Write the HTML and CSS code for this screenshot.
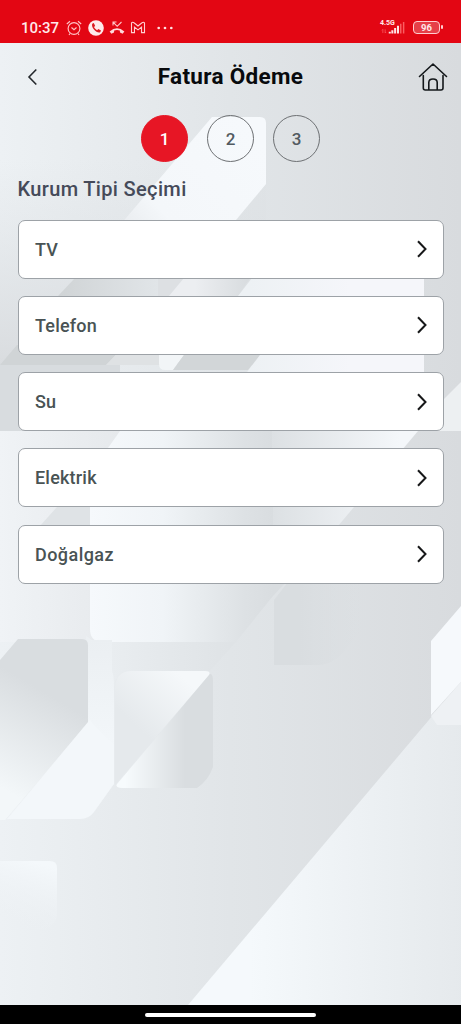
FILE: index.html
```html
<!DOCTYPE html>
<html lang="tr">
<head>
<meta charset="utf-8">
<title>Fatura Ödeme</title>
<link rel="stylesheet" href="styles.css">
</head>
<body>
<div class="screen">
  <svg class="backdrop" viewBox="0 43 461 962" preserveAspectRatio="none" aria-hidden="true">
    <defs>
      <linearGradient id="base"><stop stop-color="#edf1f4"/><stop offset=".5" stop-color="#e1e5e8"/><stop offset="1" stop-color="#d8dbde"/></linearGradient>
      <linearGradient id="sweep" gradientUnits="userSpaceOnUse" x1="250" y1="0" x2="480" y2="0"><stop stop-color="#f5f9fc"/><stop offset="1" stop-color="#e4e8eb"/></linearGradient>
      <linearGradient id="upper" x1="0" y1="0" x2="0" y2="1"><stop stop-color="#dce0e3" stop-opacity="0"/><stop offset="1" stop-color="#d9dcdf"/></linearGradient>
      <linearGradient id="shine" gradientUnits="userSpaceOnUse" x1="250" y1="130" x2="110" y2="250"><stop stop-color="#f6f9fc"/><stop offset=".65" stop-color="#f4f7fa"/><stop offset="1" stop-color="#e2e5e8"/></linearGradient>
      <linearGradient id="stripe" gradientUnits="userSpaceOnUse" x1="60" y1="0" x2="158" y2="0"><stop stop-color="#d0d4d6"/><stop offset="1" stop-color="#e1e5e8"/></linearGradient>
      <linearGradient id="stripe2" gradientUnits="userSpaceOnUse" x1="195" y1="0" x2="248" y2="0"><stop stop-color="#eceef1"/><stop offset="1" stop-color="#d8dcdf"/></linearGradient>
      <linearGradient id="panel" gradientUnits="userSpaceOnUse" x1="250" y1="0" x2="350" y2="0"><stop stop-color="#edf1f4"/><stop offset="1" stop-color="#f5f6fa"/></linearGradient>
      <linearGradient id="column" gradientUnits="userSpaceOnUse" x1="90" y1="0" x2="273" y2="0"><stop stop-color="#f6f9fc"/><stop offset=".4" stop-color="#f0f4f7"/><stop offset=".85" stop-color="#dde1e4"/><stop offset="1" stop-color="#d9dde0"/></linearGradient>
      <linearGradient id="leaf" gradientUnits="userSpaceOnUse" x1="58" y1="700" x2="5" y2="790"><stop stop-color="#d9dde0"/><stop offset="1" stop-color="#f3f7f9"/></linearGradient>
      <linearGradient id="tileTop" gradientUnits="userSpaceOnUse" x1="180" y1="675" x2="135" y2="725"><stop stop-color="#f5f8fa"/><stop offset="1" stop-color="#e5e9ec"/></linearGradient>
      <linearGradient id="tileLow" gradientUnits="userSpaceOnUse" x1="125" y1="0" x2="185" y2="0"><stop stop-color="#f7fbfd"/><stop offset="1" stop-color="#d9dde0"/></linearGradient>
      <linearGradient id="small" gradientUnits="userSpaceOnUse" x1="45" y1="865" x2="25" y2="932"><stop stop-color="#f4f8fb"/><stop offset="1" stop-color="#ecf0f3" stop-opacity="0"/></linearGradient>
      <linearGradient id="band" gradientUnits="userSpaceOnUse" x1="270" y1="0" x2="400" y2="0"><stop stop-color="#dce0e3"/><stop offset="1" stop-color="#f4f7fa"/></linearGradient>
      <linearGradient id="left" gradientUnits="userSpaceOnUse" x1="0" y1="0" x2="120" y2="0"><stop stop-color="#f0f3f6"/><stop offset="1" stop-color="#e6e9ec"/></linearGradient>
      <linearGradient id="gap" gradientUnits="userSpaceOnUse" x1="0" y1="640" x2="0" y2="750"><stop stop-color="#ebeff2"/><stop offset="1" stop-color="#f3f7fa"/></linearGradient>
      <linearGradient id="under" gradientUnits="userSpaceOnUse" x1="88" y1="0" x2="230" y2="0"><stop stop-color="#ebeff2"/><stop offset="1" stop-color="#dfe3e6"/></linearGradient>
      <linearGradient id="block" gradientUnits="userSpaceOnUse" x1="300" y1="0" x2="370" y2="0"><stop stop-color="#d9dde0"/><stop offset="1" stop-color="#dbdfe2" stop-opacity="0"/></linearGradient>
    </defs>
    <rect y="43" width="461" height="962" fill="url(#base)"/>
    <path d="M0 160H266V365H0Z" fill="url(#upper)"/>
    <path d="M212 117H260Q266 117 266 123V184L236 220 185 278H75Z" fill="url(#shine)"/>
    <path d="M75 278H158V296H58Z" fill="url(#stripe)"/>
    <path d="M17 345H125L106 365H0Z" fill="#d0d4d6"/>
    <path d="M0 365H120V431H0Z" fill="#d8dcdf"/>
    <path d="M125 345H159V365H106Z" fill="#dfe2e4"/>
    <path d="M158 278H184L169 296H158Z" fill="#dde0e3"/>
    <path d="M184 278H250L238 296H169Z" fill="url(#stripe2)"/>
    <path d="M159 355H184L173 370H165Q159 370 159 364Z" fill="#f2f5f7"/>
    <path d="M184 355H260L248 370H173Z" fill="#d2d6d8"/>
    <path d="M252 278H424V376H244L260 355 238 296Z" fill="url(#panel)"/>
    <path d="M461 382V431H405L443 400Z" fill="#edf0f2"/>
    <path d="M0 431H120V642H0Z" fill="url(#left)"/>
    <path d="M120 431H273V510H100L108 448Z" fill="url(#column)"/>
    <path d="M272 431H418L402 450 338 526H272Z" fill="url(#band)"/>
    <path d="M57 507H90V526H40Z" fill="#dfe3e6"/>
    <path d="M90 507H273V596L236 642H103Q90 642 90 629Z" fill="url(#column)"/>
    <path d="M273 526H338L284 584 273 596Z" fill="#d9dde0"/>
    <path d="M274 600L288 582H400L345 650Q333 665 318 665H274Z" fill="url(#block)"/>
    <path d="M86 636L95 642H236L210 671H131Q114 671 114 690H86Z" fill="url(#under)"/>
    <path d="M86 640H112V671Q114 675 114 690V784H86Z" fill="url(#gap)"/>
    <path d="M0 660L18 639H82Q88 639 88 645V723L5 820H0Z" fill="url(#leaf)"/>
    <path d="M88 722L90 720 114 745V784L94 812Q89 819 80 819H7Z" fill="#f3f7fa"/>
    <path d="M131 671H205Q211 671 209 675L115 785V690Q115 671 131 671Z" fill="url(#tileTop)"/>
    <path d="M210 674Q213 673 213 682V767Q208 781 197 788H122Q115 788 117 784Z" fill="url(#tileLow)"/>
    <path d="M0 861H50Q57 861 57 868V916Q55 926 44 930H0Z" fill="url(#small)"/>
    <path d="M188 1005L461 682V1005Z" fill="url(#sweep)"/>
    <path d="M461 606L431 641V715L461 682Z" fill="#f6f9fc"/>
    <path d="M461 682V725H437L431 716Z" fill="#eef1f4"/>
  </svg>

  <header class="status">
    <div class="status-left">
      <time class="clock">10:37</time>
      <svg class="ic-alarm" viewBox="0 0 16 16"><circle cx="8" cy="8.5" r="5.9"/><path d="M.8 4 4 1.3M15.2 4 12 1.3M5.5 7.5 8 9.7 10.5 7.5M4 13.5 3 15M12 13.5 13 15"/></svg>
      <svg class="ic-call" viewBox="0 0 16 16"><circle cx="8" cy="8" r="7.8" fill="#ffe9ea"/><path d="M4.2 3.7 5.8 3.1 7.2 6 5.9 7.1Q7 9.2 9.1 10.2L10.3 8.9 13 10.4 12.2 12.2C9.5 14 2.8 8 4.2 3.7Z" fill="#dc1820"/></svg>
      <svg class="ic-missed" viewBox="0 0 16 16"><path d="M4 5.5V2H7.5M4 2 8.2 6.3 12.5 2" fill="none" stroke="#ffc5c8" stroke-width="1.1"/><path d="M.6 11.5Q8 5 15.4 11.5L13.6 13.8 11 12.4 10.8 10.6Q8 9.4 5.2 10.6L5 12.4 2.4 13.8Z" fill="#ffd9db"/></svg>
      <svg class="ic-mail" viewBox="0 0 16 14"><path d="M1 12.5V2Q2.2 .6 3.7 1.9L8 5.4 12.3 1.9Q13.8 .6 15 2V12.5H11.8V6.5L8 9.5 4.2 6.5V12.5Z"/></svg>
      <svg class="ic-more" viewBox="0 0 16 4"><circle cx="1.7" cy="2" r="1.35"/><circle cx="8" cy="2" r="1.35"/><circle cx="14.3" cy="2" r="1.35"/></svg>
    </div>
    <div class="status-right">
      <div class="network">
        <span class="network-type">4.5G</span>
        <svg class="ic-signal" viewBox="0 0 26 13"><path d="M2 8V12M1 9 2 8M4.5 8V12M5.5 11 4.5 12" stroke="#ff6e72" stroke-width=".7" fill="none"/><path d="M9.5 10.5V12.5M12.3 9V12.5M15.3 6.5V12.5M18.4 4V12.5" stroke="#ffe4e5" stroke-width="2.2"/><path d="M21.4 2V12.5M24.5 0V12.5" stroke="#f95d61" stroke-width="1.6"/></svg>
      </div>
      <div class="battery"><span class="battery-level">96</span></div>
    </div>
  </header>

  <nav class="topbar">
    <svg class="ic-back" viewBox="0 0 10 18"><path d="M8.8 1.5 1.5 9 8.8 16.5"/></svg>
    <h1 class="title">Fatura Ödeme</h1>
    <svg class="ic-home" viewBox="0 0 30 30"><path d="M1.5 14.5 15 2 28.5 14.5M5.3 13.5V26Q5.3 28 7.3 28H23Q25 28 25 26V13.5M10.8 28V20.5Q10.8 17 15 17T19.2 20.5V28"/></svg>
  </nav>

  <main class="content">
    <ol class="steps">
      <li class="step step-active">1</li>
      <li class="step">2</li>
      <li class="step">3</li>
    </ol>
    <h2 class="section-title">Kurum Tipi Seçimi</h2>
    <ul class="options">
      <li class="option"><span class="option-name">TV</span><svg class="ic-next" viewBox="0 0 10 18"><path d="M1 1.2 8.5 9 1 16.8"/></svg></li>
      <li class="option"><span class="option-name">Telefon</span><svg class="ic-next" viewBox="0 0 10 18"><path d="M1 1.2 8.5 9 1 16.8"/></svg></li>
      <li class="option"><span class="option-name">Su</span><svg class="ic-next" viewBox="0 0 10 18"><path d="M1 1.2 8.5 9 1 16.8"/></svg></li>
      <li class="option"><span class="option-name">Elektrik</span><svg class="ic-next" viewBox="0 0 10 18"><path d="M1 1.2 8.5 9 1 16.8"/></svg></li>
      <li class="option"><span class="option-name option-name-wide">Doğalgaz</span><svg class="ic-next" viewBox="0 0 10 18"><path d="M1 1.2 8.5 9 1 16.8"/></svg></li>
    </ul>
  </main>
  <footer class="gesture"><span class="gesture-pill"></span></footer>
</div>
</body>
</html>
```
FILE: styles.css
```css
* { box-sizing: border-box; }
body { margin: 0; font-family: Roboto, "Noto Sans", sans-serif; }
svg { display: block; flex: none; }
h1, h2, ol, ul { margin: 0; padding: 0; list-style: none; }

.screen {
  position: relative;
  display: flex;
  flex-direction: column;
  height: 1024px;
  overflow: hidden;
}
.backdrop {
  position: absolute;
  top: 43px;
  left: 0;
  z-index: -1;
  width: 100%;
  height: 962px;
}

.status {
  display: flex;
  justify-content: space-between;
  height: 43px;
  padding: 12px 19px 0 21px;
  background: #e30613;
  color: #ffe9ea;
}
.status-left, .status-right { display: flex; align-items: center; height: 31px; }
.clock { width: 39px; font: 500 15px/20px Roboto, sans-serif; white-space: nowrap; }
.ic-alarm { width: 16px; height: 16px; margin-left: 6px; fill: none; stroke: #ffc2c5; stroke-width: 1.15; }
.ic-call { width: 16px; height: 16px; margin-left: 6px; }
.ic-missed { width: 16px; height: 16px; margin-left: 5px; }
.ic-mail { width: 16px; height: 13px; margin-left: 5px; fill: none; stroke: #ffd0d2; stroke-width: 1.2; }
.ic-more { width: 16px; height: 4px; margin-left: 11px; fill: #ffe0e1; }
.status-right { gap: 7px; }
.network { width: 26px; height: 15px; }
.network-type { display: block; font: 700 7px/6px Roboto, sans-serif; }
.ic-signal { width: 26px; height: 12px; margin-top: -4px; }
.battery {
  position: relative;
  width: 27px;
  height: 13px;
  margin-right: 2px;
  border: 1.5px solid #ffcdcf;
  border-radius: 4px;
  background: #e63f48;
  text-align: center;
}
.battery::after {
  position: absolute;
  top: 3px;
  right: -4px;
  width: 2px;
  height: 4px;
  border-radius: 1px;
  background: #ffcdcf;
  content: "";
}
.battery-level { display: block; font: 700 9.5px/11px Roboto, sans-serif; }

.topbar {
  display: flex;
  align-items: center;
  justify-content: space-between;
  height: 67px;
  padding: 0 13px 0 27px;
}
.ic-back { width: 11px; height: 18px; fill: none; stroke: #25292d; stroke-width: 1.6; }
.title { margin-left: 5px; color: #080a0d; font: 700 22.5px/28px Roboto, sans-serif; letter-spacing: .3px; padding-bottom: 2px; }
.ic-home { width: 30px; height: 30px; fill: none; stroke: #14181b; stroke-width: 1.6; stroke-linecap: round; stroke-linejoin: round; }

.content { flex: 1; padding: 5px 17.5px 0; }
.steps { display: flex; justify-content: center; gap: 19px; }
.step {
  display: grid;
  place-items: center;
  width: 47px;
  height: 47px;
  border: 1px solid #6d7073;
  border-radius: 50%;
  color: #525a60;
  font: 500 17px/20px Roboto, sans-serif;
}
.step-active { border-color: #e71625; background: #e71625; color: #fff; }
.section-title { margin-top: 14px; color: #454a59; font: 500 20px/26px Roboto, sans-serif; letter-spacing: .35px; }
.options { display: flex; flex-direction: column; gap: 17.3px; margin-top: 17.5px; }
.option {
  display: flex;
  align-items: center;
  justify-content: space-between;
  height: 59px;
  padding: 0 16px 0 16.5px;
  border: 1px solid #9da2a7;
  border-radius: 7px;
  background: #fff;
  color: #495354;
  font: 500 18px/24px Roboto, sans-serif;
  letter-spacing: .2px;
}
.option-name { padding-top: 1px; }
.option-name-wide { letter-spacing: .45px; }
.ic-next { width: 10px; height: 18px; fill: none; stroke: #171819; stroke-width: 2; }

.gesture { display: grid; place-items: center; height: 19px; background: #000; }
.gesture-pill { width: 171px; height: 4px; border-radius: 2px; background: #fff; }
```
